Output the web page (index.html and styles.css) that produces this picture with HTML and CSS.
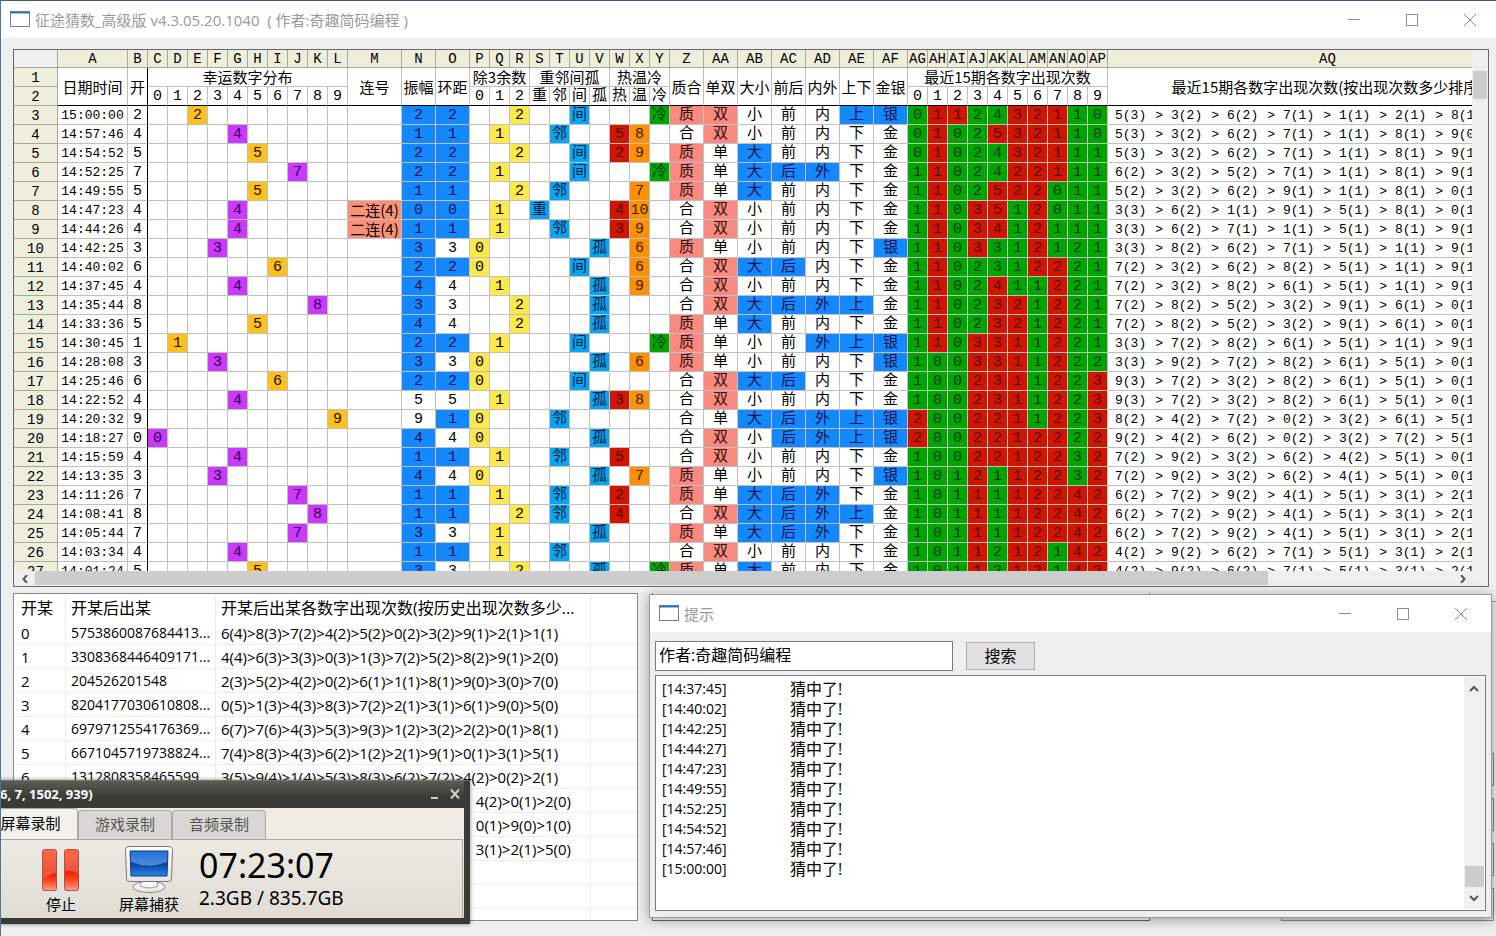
FILE: index.html
```html
<!DOCTYPE html>
<html lang="zh-CN">
<head>
<meta charset="utf-8">
<title>征途猜数_高级版</title>
<link rel="stylesheet" href="styles.css">
</head>
<body>
<div class="app">
  <header class="titlebar">
    <svg class="app-icon" width="20" height="17" viewBox="0 0 20 17"><rect x=".5" y=".5" width="19" height="15" fill="#fff" stroke="#5f87ad"/><path d="M0 1.5h20" stroke="#2f78b5" stroke-width="2"/></svg>
    <h1 class="title">征途猜数_高级版 v4.3.05.20.1040&nbsp; ( 作者:奇趣简码编程 )</h1>
    <div class="win-buttons">
      <button type="button" aria-label="最小化"><svg width="12" height="12"><path d="M0 5.5h12"/></svg></button>
      <button type="button" aria-label="最大化"><svg width="12" height="12"><path d="M.5.5h11v11h-11z"/></svg></button>
      <button type="button" aria-label="关闭"><svg width="12" height="12"><path d="M0 0l12 12M12 0L0 12"/></svg></button>
    </div>
  </header>
  <main class="content">
    <section class="sheet">
      <div class="sheet-main">
        <div class="sheet-view"><table class="grid" id="grid"></table></div>
        <div class="vscroll"><div class="vthumb"></div></div>
      </div>
      <div class="hscroll">
        <button type="button" class="harrow" aria-label="向左"><svg width="6" height="8"><path d="M5 0L1.500 4L5 8"/></svg></button>
        <div class="htrack"><div class="hthumb"></div></div>
        <button type="button" class="harrow" aria-label="向右"><svg width="6" height="8"><path d="M1 0L4.500 4L1 8"/></svg></button>
      </div>
    </section>
    <section class="lower">
      <div class="list">
        <table class="history">
          <colgroup><col class="h1"><col class="h2"><col class="h3"><col></colgroup>
          <thead><tr><th>开某</th><th>开某后出某</th><th>开某后出某各数字出现次数(按历史出现次数多少...</th><th></th></tr></thead>
          <tbody>
            <tr><td>0</td><td>5753860087684413...</td><td>6(4)&gt;8(3)&gt;7(2)&gt;4(2)&gt;5(2)&gt;0(2)&gt;3(2)&gt;9(1)&gt;2(1)&gt;1(1)</td><td></td></tr>
            <tr><td>1</td><td>3308368446409171...</td><td>4(4)&gt;6(3)&gt;3(3)&gt;0(3)&gt;1(3)&gt;7(2)&gt;5(2)&gt;8(2)&gt;9(1)&gt;2(0)</td><td></td></tr>
            <tr><td>2</td><td>204526201548</td><td>2(3)&gt;5(2)&gt;4(2)&gt;0(2)&gt;6(1)&gt;1(1)&gt;8(1)&gt;9(0)&gt;3(0)&gt;7(0)</td><td></td></tr>
            <tr><td>3</td><td>8204177030610808...</td><td>0(5)&gt;1(3)&gt;4(3)&gt;8(3)&gt;7(2)&gt;2(1)&gt;3(1)&gt;6(1)&gt;9(0)&gt;5(0)</td><td></td></tr>
            <tr><td>4</td><td>6979712554176369...</td><td>6(7)&gt;7(6)&gt;4(3)&gt;5(3)&gt;9(3)&gt;1(2)&gt;3(2)&gt;2(2)&gt;0(1)&gt;8(1)</td><td></td></tr>
            <tr><td>5</td><td>6671045719738824...</td><td>7(4)&gt;8(3)&gt;4(3)&gt;6(2)&gt;1(2)&gt;2(1)&gt;9(1)&gt;0(1)&gt;3(1)&gt;5(1)</td><td></td></tr>
            <tr><td>6</td><td>1312808358465599...</td><td>3(5)&gt;9(4)&gt;1(4)&gt;5(3)&gt;8(3)&gt;6(2)&gt;7(2)&gt;4(2)&gt;0(2)&gt;2(1)</td><td></td></tr>
            <tr><td></td><td></td><td class="tail">4(2)&gt;0(1)&gt;2(0)</td><td></td></tr>
            <tr><td></td><td></td><td class="tail">0(1)&gt;9(0)&gt;1(0)</td><td></td></tr>
            <tr><td></td><td></td><td class="tail">3(1)&gt;2(1)&gt;5(0)</td><td></td></tr>
            <tr><td></td><td></td><td></td><td></td></tr>
            <tr><td></td><td></td><td></td><td></td></tr>
            <tr class="rest"><td></td><td></td><td></td><td></td></tr>
          </tbody>
        </table>
      </div>
      <div class="pane"></div>
      <div class="side"><i></i><i></i><i></i><i></i></div>
    </section>
  </main>

  <section class="tip">
    <header class="titlebar tip-title">
      <svg class="app-icon" width="20" height="17" viewBox="0 0 20 17"><rect x=".5" y=".5" width="19" height="15" fill="#fff" stroke="#5f87ad"/><path d="M0 1.500h20" stroke="#2f78b5" stroke-width="2"/></svg>
      <h2 class="title">提示</h2>
      <div class="win-buttons">
        <button type="button" aria-label="最小化"><svg width="12" height="12"><path d="M0 5.5h12"/></svg></button>
        <button type="button" aria-label="最大化"><svg width="12" height="12"><path d="M.5.5h11v11h-11z"/></svg></button>
        <button type="button" aria-label="关闭"><svg width="12" height="12"><path d="M0 0l12 12M12 0L0 12"/></svg></button>
      </div>
    </header>
    <div class="tip-body">
      <div class="search">
        <input type="text" aria-label="搜索内容" value="作者:奇趣简码编程">
        <button type="button">搜索</button>
      </div>
      <div class="log">
        <ul>
          <li><time>[14:37:45]</time>猜中了!</li>
          <li><time>[14:40:02]</time>猜中了!</li>
          <li><time>[14:42:25]</time>猜中了!</li>
          <li><time>[14:44:27]</time>猜中了!</li>
          <li><time>[14:47:23]</time>猜中了!</li>
          <li><time>[14:49:55]</time>猜中了!</li>
          <li><time>[14:52:25]</time>猜中了!</li>
          <li><time>[14:54:52]</time>猜中了!</li>
          <li><time>[14:57:46]</time>猜中了!</li>
          <li><time>[15:00:00]</time>猜中了!</li>
        </ul>
        <div class="log-scroll">
          <button type="button" aria-label="向上"><svg width="10" height="7"><path d="M1 6L5 2L9 6"/></svg></button>
          <div class="log-thumb"></div>
          <button type="button" aria-label="向下"><svg width="10" height="7"><path d="M1 1L5 5L9 1"/></svg></button>
        </div>
      </div>
    </div>
  </section>

  <section class="recorder">
    <header class="rec-title">
      <span>6, 7, 1502, 939)</span>
      <div class="rec-buttons">
        <button type="button" aria-label="最小化"><svg width="10" height="12"><path d="M1 10h7" stroke-width="2"/></svg></button>
        <button type="button" aria-label="关闭"><svg width="10" height="12"><path d="M1 1.500l8 9M9 1.500l-8 9" stroke-width="2"/></svg></button>
      </div>
    </header>
    <div class="rec-body">
      <nav class="tabs">
        <button type="button" class="tab active">屏幕录制</button>
        <button type="button" class="tab">游戏录制</button>
        <button type="button" class="tab">音频录制</button>
      </nav>
      <div class="rec-panel">
        <button type="button" class="tool stop">
          <svg width="38" height="48" viewBox="0 0 38 48">
            <defs>
              <linearGradient id="bar" x1="0" y1="0" x2="0" y2="1"><stop offset="0" stop-color="#ff6a48"/><stop offset=".5" stop-color="#ee5540"/><stop offset="1" stop-color="#f4503a"/></linearGradient>
              <linearGradient id="glow" x1="0" y1="0" x2="0" y2="1"><stop offset="0" stop-color="#f01800"/><stop offset=".5" stop-color="#ff4a20"/><stop offset="1" stop-color="#ff9a88"/></linearGradient>
            </defs>
            <rect x=".5" y="3.500" width="14" height="41" rx="2" fill="url(#bar)" stroke="#b5503e"/>
            <rect x="22.500" y="3.500" width="14" height="41" rx="2" fill="url(#bar)" stroke="#b5503e"/>
            <path d="M1 34Q7 28 14 27V42Q14 44 12 44H3Q1 44 1 42Z" fill="url(#glow)"/>
            <path d="M23 25Q31 24 36 28V42Q36 44 34 44H25Q23 44 23 42Z" fill="url(#glow)"/>
          </svg>
          <span>停止</span>
        </button>
        <button type="button" class="tool capture">
          <svg width="48" height="48" viewBox="0 0 48 48">
            <defs>
              <linearGradient id="screen" x1="0" y1="0" x2="0" y2="1"><stop offset="0" stop-color="#1a6fd8"/><stop offset=".5" stop-color="#0640a0"/><stop offset="1" stop-color="#2a86e8"/></linearGradient>
              <linearGradient id="shine" x1="0" y1="0" x2="0" y2="1"><stop offset="0" stop-color="#2d78e0"/><stop offset="1" stop-color="#7cc4ff"/></linearGradient>
              <linearGradient id="shell" x1="0" y1="0" x2="0" y2="1"><stop offset="0" stop-color="#fff"/><stop offset="1" stop-color="#e6e6e6"/></linearGradient>
            </defs>
            <ellipse cx="24" cy="41" rx="16" ry="5.500" fill="url(#shell)" stroke="#888"/>
            <path d="M17 34h14l2 6q-9 4-18 0z" fill="#f8f8f8" stroke="#999"/>
            <path d="M4 .5h40q3.500 0 3.500 3l-1 29q0 3-3 3h-39q-3 0-3-3l-1-29q0-3 3.500-3z" fill="url(#shell)" stroke="#777"/>
            <path d="M5 5h38l-1 25h-36z" fill="url(#screen)" stroke="#123a7a"/>
            <path d="M6 6h36v10q-18 7-36 0z" fill="url(#shine)" opacity=".6"/>
          </svg>
          <span>屏幕捕获</span>
        </button>
        <div class="status"><strong>07:23:07</strong><span>2.3GB / 835.7GB</span></div>
      </div>
    </div>
  </section>
</div>
<script src="grid.js"></script>
</body>
</html>
```

FILE: styles.css
```css
* { box-sizing: border-box; }
body {
  margin: 0;
  font-family: "Open Sans", "Noto Sans CJK SC", sans-serif;
  color: #000;
}
button { margin: 0; padding: 0; border: 0; background: none; font: inherit; color: inherit; }
h1, h2, ul { margin: 0; padding: 0; font-weight: 400; list-style: none; }
svg { display: block; }

.app {
  position: relative;
  display: flex;
  flex-direction: column;
  height: 100vh;
  overflow: hidden;
  background: #efefef;
  border-top: 1px solid #3c5f80;
  border-left: 1px solid #4a7898;
}

.titlebar {
  display: flex;
  align-items: center;
  height: 37px;
  padding: 0 20px 0 9px;
  background: #fff;
}
.title {
  flex: 1;
  margin-left: 5px;
  font-size: 15px;
  line-height: 20px;
  color: #999;
}
.win-buttons { display: flex; gap: 46px; }
.win-buttons svg { fill: none; stroke: #8c8c8c; }

.content {
  flex: 1;
  min-height: 0;
  display: flex;
  flex-direction: column;
  gap: 6px;
  padding: 11px 0 15px 12px;
}

/* spreadsheet */
.sheet {
  flex: 1;
  min-height: 0;
  margin-right: 7px;
  display: flex;
  flex-direction: column;
  border: 1px solid #696969;
  background: #efefef;
}
.sheet-main { flex: 1; min-height: 0; display: flex; }
.sheet-view { flex: 1; min-width: 0; overflow: hidden; background: #fff; }
.vscroll { width: 16px; padding: 21px 1px 0; }
.vthumb { height: 28px; background: #cdcdcd; }
.hscroll { display: flex; height: 15px; padding-right: 15px; }
.harrow { width: 21px; display: flex; align-items: center; justify-content: center; }
.harrow svg, .log-scroll svg { fill: none; stroke: #555; stroke-width: 2; }
.htrack { flex: 1; }
.hthumb { width: 87%; height: 14px; background: #cdcdcd; }

.grid { table-layout: fixed; width: 1534px; border-collapse: separate; border-spacing: 0; }
.grid th, .grid td {
  height: 19px;
  padding: 2px 0 0;
  border-right: 1px solid #c0c0c0;
  border-bottom: 1px solid #c0c0c0;
  font-family: "Liberation Mono", "Noto Sans CJK SC", monospace;
  font-size: 15px;
  font-weight: 400;
  line-height: 16px;
  text-align: center;
  white-space: nowrap;
}
.grid .letter, .grid .num { background: #eeeedc; border-color: #a8a898; font-size: 14px; }
.grid .letter { height: 18px; line-height: 15px; }
.grid .corner { background: #efefef; }
.grid .cjk { padding: 0; font-family: "Noto Sans CJK SC", sans-serif; }
.grid .time { font-size: 13px; }
.grid .edge { border-right-color: #000; }
.grid .base { border-bottom-color: #000; }
.grid .rank { padding-left: 7px; font-size: 13px; text-align: left; }
.rank div { display: flex; }
.rank span { display: flex; flex: none; justify-content: space-between; width: 56px; padding-right: 8px; }
.grid .purple { background: #cc38fc; color: #300050; }
.grid .amber { background: #ffc01c; color: #201000; }
.grid .blue { background: #1488ff; color: #101048; }
.grid .yellow { background: #ffe94a; }
.grid .sky { background: #06a6f4; color: #001838; }
.grid .coral { background: #ff9078; }
.grid .pink { background: #f88a80; color: #301010; }
.grid .orange { background: #ff9000; color: #402000; }
.grid .red { background: #d01600; color: #540800; }
.grid .green { background: #00a600; color: #003800; }

/* lower area */
.lower { display: flex; }
.list { width: 625px; border: 1px solid #828790; background: #fff; }
.history { width: 100%; table-layout: fixed; border-collapse: separate; border-spacing: 0; }
.h1 { width: 52px; }
.h2 { width: 150px; }
.h3 { width: 375px; }
.history th, .history td {
  height: 24px;
  padding: 0 0 0 5px;
  border-right: 1px solid #ececec;
  border-bottom: 1px solid #ececec;
  text-align: left;
  font-weight: 400;
  font-size: 15px;
  line-height: 22px;
  white-space: nowrap;
}
.history th { height: 27px; padding-top: 2px; font-size: 16px; border-bottom-color: #fff; }
.history td:first-child, .history th:first-child { padding-left: 7px; }
.history td:nth-child(2) { font-size: 14px; }
.history td:last-child, .history th:last-child { border-right: 0; }
.history .tail { text-align: right; padding-right: 19px; }
.history .rest td { height: 11px; line-height: 10px; border-bottom: 0; }
.pane { width: 498px; margin-left: 14px; border: 1px solid #696969; border-top: 0; background: #fff; }
.side {
  flex: 1;
  margin: 8px 0 0 131px;
  padding-right: 2px;
  border-top: 1px solid #a0a0a0;
  display: flex;
  flex-direction: column;
  justify-content: flex-end;
  gap: 12px;
}
.side i { height: 33px; border: 1px solid #8c8c8c; background: #e1e1e1; }

/* message window */
.tip {
  position: absolute;
  right: 4px;
  bottom: 18px;
  width: 843px;
  border: 1px solid #9a9a9a;
  background: #efefef;
  box-shadow: 0 2px 12px rgba(0, 0, 0, .35);
}
.tip-title { padding-right: 24px; }
.tip-body { padding: 9px 5px 6px; }
.search { display: flex; align-items: center; gap: 13px; height: 30px; }
.search input {
  width: 298px;
  height: 30px;
  padding: 0 3px 4px;
  border: 1px solid #7a7a7a;
  background: #fff;
  font: 16px "Open Sans", "Noto Sans CJK SC", sans-serif;
  color: #000;
}
.search button { width: 69px; height: 28px; border: 1px solid #adadad; background: #e1e1e1; font-size: 16px; line-height: 24px; }
.log { display: flex; margin-top: 4px; height: 236px; padding: 1px; border: 1px solid #7a7a7a; background: #fff; }
.log ul { flex: 1; padding: 2px 0 0 5px; font-size: 16px; line-height: 20px; }
.log li { display: flex; }
.log time { width: 128px; font-size: 14px; }
.log-scroll { width: 20px; display: flex; flex-direction: column; align-items: center; background: #f0f0f0; }
.log-scroll button { height: 22px; display: flex; align-items: center; }
.log-thumb { width: 19px; height: 21px; margin-top: auto; background: #cdcdcd; }

/* recorder */
.recorder {
  position: absolute;
  left: -1px;
  bottom: 12px;
  width: 470px;
  padding: 0 6px 6px 0;
  border-top: 1px solid #75756f;
  border-radius: 0 3px 0 0;
  background: #3a3a36;
  box-shadow: 0 0 4px rgba(0, 0, 0, .5);
}
.rec-title {
  display: flex;
  align-items: center;
  justify-content: space-between;
  height: 27px;
  padding-bottom: 2px;
  font: bold 13px/20px "Noto Sans", sans-serif;
  color: #fff;
  background: linear-gradient(#5c5c56, #3a3a36 60%);
}
.rec-buttons { display: flex; gap: 10px; padding-right: 4px; }
.rec-buttons svg { stroke: #d0d0cc; }
.rec-body { background: linear-gradient(#f2efe9, #dfddd6); }
.tabs { display: flex; align-items: flex-end; height: 31px; background: #efece6; }
.tab {
  width: 94px;
  height: 29px;
  padding-bottom: 3px;
  border: 1px solid #aaa8a2;
  border-bottom: 0;
  border-radius: 4px 4px 0 0;
  background: #d9d7d3;
  font-size: 15px;
  color: #555;
}
.tab.active { width: 78px; height: 31px; padding-right: 16px; border-left: 0; background: #f3f1ec; color: #000; white-space: nowrap; }
.rec-panel {
  display: flex;
  height: 79px;
  padding-top: 6px;
  margin-right: 1px;
  border-top: 1px solid #aaa8a2;
  border-right: 1px solid #aaa8a2;
}
.tool { display: flex; flex-direction: column; align-items: center; font-size: 15px; line-height: 20px; }
.stop { width: 38px; margin-left: 42px; }
.capture { width: 62px; margin-left: 38px; }
.status { margin-left: 19px; display: flex; flex-direction: column; font-family: "Noto Sans", sans-serif; white-space: nowrap; }
.status strong { font-size: 34px; line-height: 38px; font-weight: 400; }
.status span { font-size: 19px; line-height: 28px; }
```

FILE: grid.js
```js
// time | number | amplitude | ring distance | hot | warm | cold | counts 0-9 | count colours | ranking
const rows = `15:00:00|2|2|2|||1|0112432110|grrggrrrgg|5(3) 3(2) 6(2) 7(1) 1(1) 2(1) 8(1)
14:57:46|4|1|1|5|8||0102532110|grggrrrrgg|5(3) 3(2) 6(2) 7(1) 1(1) 8(1) 9(0)
14:54:52|5|2|2|2|9||0102432111|grgggrrrgg|5(3) 3(2) 6(2) 7(1) 1(1) 8(1) 9(1)
14:52:25|7|2|2|||1|1102422111|grgggrrrgg|6(2) 3(2) 5(2) 7(1) 1(1) 8(1) 9(1)
14:49:55|5|1|1||7||1102522011|grggrrrggg|5(2) 3(2) 6(2) 9(1) 1(1) 8(1) 0(1)
14:47:23|4|0|0|4|10||1103512011|grgrrgrggg|3(3) 6(2) 1(1) 9(1) 5(1) 8(1) 0(1)
14:44:26|4|1|1|3|9||1103412111|grgrrgrggg|3(3) 6(2) 7(1) 1(1) 5(1) 8(1) 9(1)
14:42:25|3|3|3||6||1103312121|grgrggrggg|3(3) 8(2) 6(2) 7(1) 5(1) 1(1) 9(1)
14:40:02|6|2|2||6||1102312221|grggggrrgg|7(2) 3(2) 6(2) 8(2) 5(1) 1(1) 9(1)
14:37:45|4|4|4||9||1102411221|grggrggrgg|7(2) 3(2) 8(2) 6(1) 5(1) 1(1) 9(1)
14:35:44|8|3|3||||1102321221|grggrrgrgg|7(2) 8(2) 5(2) 3(2) 9(1) 6(1) 0(1)
14:33:36|5|4|4||||1102321221|grggrrgrgg|7(2) 8(2) 5(2) 3(2) 9(1) 6(1) 0(1)
14:30:45|1|2|2|||1|1103311221|grgrrrgrgg|3(3) 7(2) 8(2) 6(1) 5(1) 1(1) 9(1)
14:28:08|3|3|3||6||1003311222|gggrrrgrgg|3(3) 9(2) 7(2) 8(2) 6(1) 5(1) 0(1)
14:25:46|6|2|2||||1002311223|gggrrrgrgr|9(3) 7(2) 3(2) 8(2) 6(1) 5(1) 0(1)
14:22:52|4|5|5|3|8||1002311223|gggrrrgrgr|9(3) 7(2) 3(2) 8(2) 6(1) 5(1) 0(1)
14:20:32|9|9|1||||2002211223|rggrrrgrgr|8(2) 4(2) 7(2) 0(2) 3(2) 6(1) 5(1)
14:18:27|0|4|4||||2002212222|rggrrrrrgr|9(2) 4(2) 6(2) 0(2) 3(2) 7(2) 5(1)
14:15:59|4|1|1|5|||1002212232|gggrrrrrgr|7(2) 9(2) 3(2) 6(2) 4(2) 5(1) 0(1)
14:13:35|3|4|4||7||1012112232|gggrgrrrgr|7(2) 9(2) 3(2) 6(2) 4(1) 5(1) 0(1)
14:11:26|7|1|1|2|||1011112242|gggrgrrrrr|6(2) 7(2) 9(2) 4(1) 5(1) 3(1) 2(1)
14:08:41|8|1|1|4|||1011112242|gggrgrrrrr|6(2) 7(2) 9(2) 4(1) 5(1) 3(1) 2(1)
14:05:44|7|3|3||||1011112242|gggrgrrrrr|6(2) 7(2) 9(2) 4(1) 5(1) 3(1) 2(1)
14:03:34|4|1|1||||1011212142|gggrgrrgrr|4(2) 9(2) 6(2) 7(1) 5(1) 3(1) 2(1)
14:01:24|5|3|3|||1|1011212142|gggrgrrgrr|4(2) 9(2) 6(2) 7(1) 5(1) 3(1) 2(1)`.split('\n');

const widths = [44, 70, 20, ...Array(10).fill(20), 54, 34, 34,
  ...Array(10).fill(20), ...Array(7).fill(34), ...Array(10).fill(20), 440];

const td = (text, cls = '') => `<td class="${cls}">${text}</td>`;
const mark = (on, text, cls) => on ? td(text, cls) : td('');
const either = (on, yes, no, cls) => on ? td(yes, cls) : td(no);
const digits = [0, 1, 2, 3, 4, 5, 6, 7, 8, 9];

function letter(i) {
  return (i >= 26 ? 'A' : '') + String.fromCharCode(65 + i % 26);
}

function head() {
  const tall = (t, c = '') => `<th rowspan="2" class="cjk base ${c}">${t}</th>`;
  const wide = (t, n) => `<th colspan="${n}" class="cjk">${t}</th>`;
  const sub = t => `<th class="base">${t}</th>`;
  let h = '<tr><th class="letter corner"></th>';
  for (let i = 0; i < 43; i++) h += `<th class="letter">${letter(i)}</th>`;
  h += '</tr><tr><th class="num">1</th>' + tall('日期时间') + tall('开', 'edge')
    + wide('幸运数字分布', 10) + tall('连号') + tall('振幅') + tall('环距')
    + wide('除3余数', 3) + wide('重邻间孤', 4) + wide('热温冷', 3)
    + ['质合', '单双', '大小', '前后', '内外', '上下', '金银'].map(t => tall(t)).join('')
    + wide('最近15期各数字出现次数', 10) + tall('最近15期各数字出现次数(按出现次数多少排序)');
  h += '</tr><tr><th class="num">2</th>'
    + [...digits, 0, 1, 2, ...'重邻间孤热温冷', ...digits].map(sub).join('') + '</tr>';
  return h;
}

function body(line, index) {
  const [time, ns, amp, ring, hot, warm, cold, counts, colours, rank] = line.split('|');
  const n = +ns, r = +ring;
  let h = `<tr><th class="num">${index + 3}</th>` + td(time, 'time') + td(n, 'edge');
  h += digits.map(d => mark(d === n, d, [0, 3, 4, 7, 8].includes(d) ? 'purple' : 'amber')).join('');
  h += index === 5 || index === 6 ? td('二连(4)', 'cjk coral') : td('');
  h += td(amp, amp <= 4 ? 'blue' : '') + td(ring, r <= 2 ? 'blue' : '');
  h += [0, 1, 2].map(d => mark(n % 3 === d, d, 'yellow')).join('');
  h += [...'重邻间孤'].map((t, i) => mark(Math.min(r, 3) === i, t, 'sky')).join('');
  h += mark(hot, hot, 'red') + mark(warm, warm, 'orange') + mark(cold, '冷', 'green');
  h += either([1, 2, 3, 5, 7].includes(n), '质', '合', 'pink');
  h += either(n % 2 === 0, '双', '单', 'pink');
  h += either(n >= 5, '大', '小', 'blue');
  h += either([6, 7, 8, 9, 0].includes(n), '后', '前', 'blue');
  h += either([7, 8, 9, 0, 1].includes(n), '外', '内', 'blue');
  h += either([8, 9, 0, 1, 2].includes(n), '上', '下', 'blue');
  h += either([9, 0, 1, 2, 3].includes(n), '银', '金', 'blue');
  h += [...counts].map((c, i) => td(c, colours[i] === 'r' ? 'red' : 'green')).join('');
  h += td('<div>' + rank.split(' ').map(s => `<span><b style="font-weight:400">${s}</b>&gt;</span>`).join('') + '</div>', 'rank');
  return h + '</tr>';
}

document.getElementById('grid').innerHTML =
  '<colgroup>' + widths.map(w => `<col style="width:${w}px">`).join('') + '</colgroup>'
  + '<thead>' + head() + '</thead><tbody>' + rows.map(body).join('') + '</tbody>';
```
